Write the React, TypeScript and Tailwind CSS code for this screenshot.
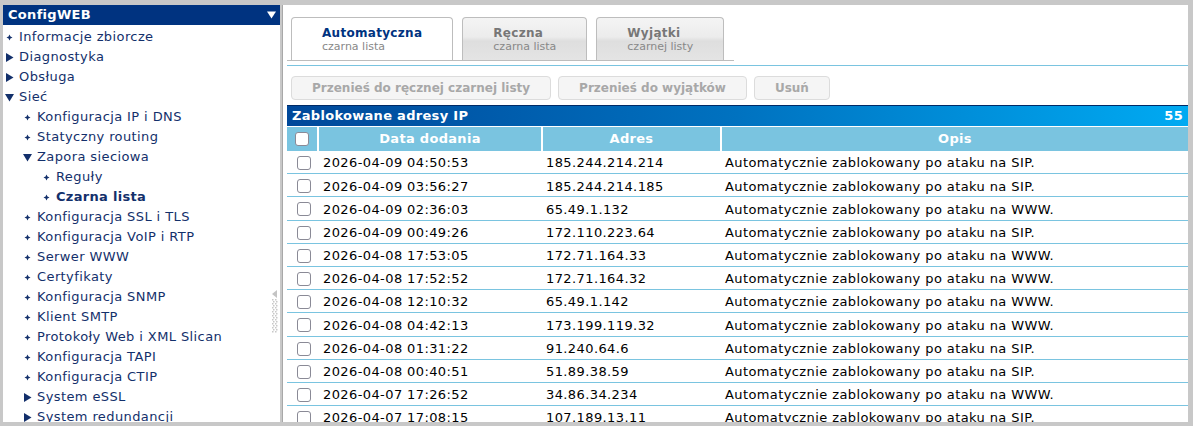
import React from 'react'

const font = { fontFamily: '"DejaVu Sans", Verdana, sans-serif' }

type Item = { label: string; level: 0 | 1 | 2; kind: 'leaf' | 'closed' | 'open'; active?: boolean }

const menu: Item[] = [
  { label: 'Informacje zbiorcze', level: 0, kind: 'leaf' },
  { label: 'Diagnostyka', level: 0, kind: 'closed' },
  { label: 'Obsługa', level: 0, kind: 'closed' },
  { label: 'Sieć', level: 0, kind: 'open' },
  { label: 'Konfiguracja IP i DNS', level: 1, kind: 'leaf' },
  { label: 'Statyczny routing', level: 1, kind: 'leaf' },
  { label: 'Zapora sieciowa', level: 1, kind: 'open' },
  { label: 'Reguły', level: 2, kind: 'leaf' },
  { label: 'Czarna lista', level: 2, kind: 'leaf', active: true },
  { label: 'Konfiguracja SSL i TLS', level: 1, kind: 'leaf' },
  { label: 'Konfiguracja VoIP i RTP', level: 1, kind: 'leaf' },
  { label: 'Serwer WWW', level: 1, kind: 'leaf' },
  { label: 'Certyfikaty', level: 1, kind: 'leaf' },
  { label: 'Konfiguracja SNMP', level: 1, kind: 'leaf' },
  { label: 'Klient SMTP', level: 1, kind: 'leaf' },
  { label: 'Protokoły Web i XML Slican', level: 1, kind: 'leaf' },
  { label: 'Konfiguracja TAPI', level: 1, kind: 'leaf' },
  { label: 'Konfiguracja CTIP', level: 1, kind: 'leaf' },
  { label: 'System eSSL', level: 1, kind: 'closed' },
  { label: 'System redundancji', level: 1, kind: 'closed' },
]

const rows = [
  ['2026-04-09 04:50:53', '185.244.214.214', 'SIP'],
  ['2026-04-09 03:56:27', '185.244.214.185', 'SIP'],
  ['2026-04-09 02:36:03', '65.49.1.132', 'WWW'],
  ['2026-04-09 00:49:26', '172.110.223.64', 'SIP'],
  ['2026-04-08 17:53:05', '172.71.164.33', 'WWW'],
  ['2026-04-08 17:52:52', '172.71.164.32', 'WWW'],
  ['2026-04-08 12:10:32', '65.49.1.142', 'WWW'],
  ['2026-04-08 04:42:13', '173.199.119.32', 'WWW'],
  ['2026-04-08 01:31:22', '91.240.64.6', 'SIP'],
  ['2026-04-08 00:40:51', '51.89.38.59', 'SIP'],
  ['2026-04-07 17:26:52', '34.86.34.234', 'WWW'],
  ['2026-04-07 17:08:15', '107.189.13.11', 'SIP'],
]

const indent = ['pl-[2px]', 'pl-[20px]', 'pl-[39px]']

function Marker({ kind }: { kind: Item['kind'] }) {
  if (kind === 'leaf')
    return (
      <svg width="9" height="9" viewBox="0 0 9 9" className="shrink-0">
        <path d="M4.5 1.5 L6 4.5 L4.5 7.5 L3 4.5 Z M1.5 4.5 L4.5 3 L7.5 4.5 L4.5 6 Z" fill="#13306b" />
      </svg>
    )
  if (kind === 'closed')
    return (
      <svg width="9" height="9" viewBox="0 0 9 9" className="shrink-0">
        <path d="M1 0 L8.5 4.5 L1 9 Z" fill="#13306b" />
      </svg>
    )
  return (
    <svg width="9" height="9" viewBox="0 0 9 9" className="shrink-0">
      <path d="M0 1 L9 1 L4.5 8.5 Z" fill="#13306b" />
    </svg>
  )
}

function Checkbox() {
  return <span className="block h-[14px] w-[14px] rounded-[3px] border border-[#8a8a96] bg-white" />
}

function Sidebar() {
  return (
    <aside className="relative flex w-[277px] shrink-0 flex-col overflow-hidden bg-white">
      <div className="flex h-[20px] shrink-0 items-center justify-between bg-[#003380] pl-[5px] pr-[4px] text-[13px] font-bold tracking-[0.3px] text-white">
        <span>ConfigWEB</span>
        <svg width="9" height="8" viewBox="0 0 9 8">
          <path d="M0 0.5 L9 0.5 L4.5 7.5 Z" fill="white" />
        </svg>
      </div>
      <ul className="mt-[2px]">
        {menu.map((m) => (
          <li
            key={m.label}
            className={`flex h-[20px] items-center gap-[5px] text-[13px] text-[#13306b] ${indent[m.level]} ${
              m.active ? 'font-bold tracking-[0.3px]' : 'tracking-[0.4px]'
            }`}
          >
            <Marker kind={m.kind} />
            <span>{m.label}</span>
          </li>
        ))}
      </ul>
      <svg width="8" height="46" viewBox="0 0 8 46" className="absolute right-[1px] top-[285px]">
        <path d="M6 0 L6 8 L1 4 Z" fill="#c4c4c4" />
        {Array.from({ length: 17 }).map((_, i) => (
          <g key={i}>
            <rect x={i % 2 ? 2 : 1} y={9 + i * 2} width="1.5" height="1.5" fill="#c8c8c8" />
            <rect x={i % 2 ? 5 : 4} y={9 + i * 2} width="1.5" height="1.5" fill="#c8c8c8" />
          </g>
        ))}
      </svg>
    </aside>
  )
}

function Tab({ title, sub, active }: { title: string; sub: string; active?: boolean }) {
  return (
    <div
      className={`flex h-[43px] flex-col rounded-t-[4px] border border-b-0 border-[#bdbdbd] px-[30px] pt-[8px] ${
        active ? 'bg-white' : 'bg-[linear-gradient(#f4f4f4,#ececec_45%,#dedede_55%,#e4e4e4)]'
      }`}
    >
      <span
        className={`text-[12px] font-bold leading-[14px] tracking-[0.3px] ${active ? 'text-[#003380]' : 'text-[#777]'}`}
      >
        {title}
      </span>
      <span className="text-[11px] leading-[14px] text-[#888]">{sub}</span>
    </div>
  )
}

function Btn({ children }: { children: React.ReactNode }) {
  return (
    <div className="flex h-[24px] items-center rounded-[4px] border border-[#dcdcdc] bg-[#f5f5f5] px-[20px] text-[12px] font-bold text-[#a8a8a8]">
      {children}
    </div>
  )
}

function Main() {
  return (
    <main className="flex min-w-0 flex-1 flex-col overflow-hidden border-l border-[#a8a8a8] bg-white pl-[4px]">
      <div className="flex w-fit shrink-0 items-end gap-[9px] border-b border-[#bdbdbd] pl-[4px] pr-[10px] pt-[12px]">
        <Tab title="Automatyczna" sub="czarna lista" active />
        <Tab title="Ręczna" sub="czarna lista" />
        <Tab title="Wyjątki" sub="czarnej listy" />
      </div>
      <div className="mt-[4px] h-px shrink-0 bg-[#7ac4e0]" />
      <div className="flex shrink-0 gap-[7px] pl-[4px] pt-[10px]">
        <Btn>Przenieś do ręcznej czarnej listy</Btn>
        <Btn>Przenieś do wyjątków</Btn>
        <Btn>Usuń</Btn>
      </div>
      <div className="mt-[5px] flex h-[21px] shrink-0 items-center justify-between border-t border-[#002a66] bg-[linear-gradient(to_right,#00489a,#0072c0_50%,#00aaf2)] px-[5px] text-[13px] font-bold tracking-[0.3px] text-white">
        <span>Zablokowane adresy IP</span>
        <span>55</span>
      </div>
      <div className="flex h-[25px] shrink-0 gap-[2px] border-t border-white bg-white text-[13px] font-bold tracking-[0.3px] text-white">
        <div className="flex w-[30px] items-center justify-center bg-[#7ac4e0]">
          <Checkbox />
        </div>
        <div className="flex w-[222px] items-center justify-center bg-[#7ac4e0]">Data dodania</div>
        <div className="flex w-[177px] items-center justify-center bg-[#7ac4e0]">Adres</div>
        <div className="flex flex-1 items-center justify-center bg-[#7ac4e0]">Opis</div>
      </div>
      {rows.map(([d, ip, kind]) => (
        <div
          key={d}
          className="flex h-[23.2px] shrink-0 items-center border-b border-[#7ac4e0] pt-[2px] text-[13px] tracking-[0.4px] text-black"
        >
          <div className="flex w-[32px] justify-center pl-[1px]">
            <Checkbox />
          </div>
          <div className="w-[224px] pl-[4px]">{d}</div>
          <div className="w-[179px] pl-[3px]">{ip}</div>
          <div className="flex-1 pl-[3px]">Automatycznie zablokowany po ataku na {kind}.</div>
        </div>
      ))}
    </main>
  )
}

export default function App() {
  return (
    <div
      style={font}
      className="flex h-[426px] w-[1193px] gap-[2px] overflow-hidden bg-[#c8c8c8] pb-[4px] pl-[3px] pr-[5px] pt-[5px]"
    >
      <Sidebar />
      <Main />
    </div>
  )
}
